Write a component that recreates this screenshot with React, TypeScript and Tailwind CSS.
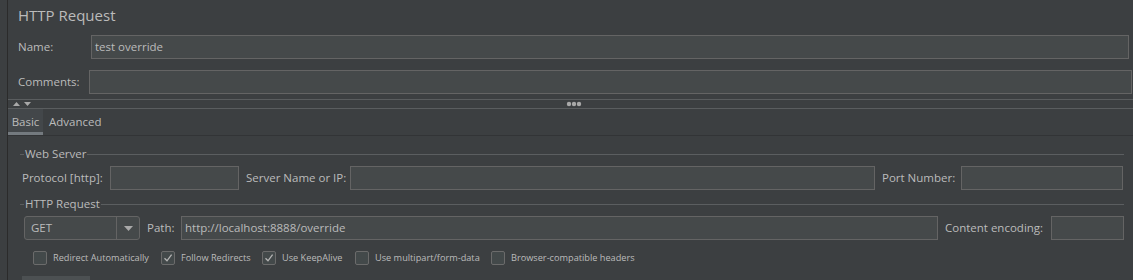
import React from 'react';

const font = { fontFamily: '"Open Sans", "Noto Sans", sans-serif' };

const Field: React.FC<{ className?: string; value?: string }> = ({ className = '', value }) => (
  <div
    className={`h-[24px] shrink-0 bg-[#45494a] border border-[#646464] flex items-center pl-[3px] text-[11.5px] text-[#bbbbbb] ${className}`}
  >
    {value}
  </div>
);

const Label: React.FC<{ className?: string; children: React.ReactNode }> = ({ className = '', children }) => (
  <span className={`text-[11.5px] text-[#bbbbbb] whitespace-nowrap shrink-0 ${className}`}>{children}</span>
);

const TitledLine: React.FC<{ title: string }> = ({ title }) => (
  <div className="flex items-center h-[14px] ml-[12px] mr-[9px]">
    <div className="w-[4px] h-px bg-[#5b5e60]" />
    <span className="px-[1px] text-[11.5px] text-[#bbbbbb] leading-none">{title}</span>
    <div className="flex-1 h-px bg-[#5b5e60]" />
  </div>
);

const Check: React.FC<{ checked?: boolean; label: string; className?: string }> = ({ checked, label, className = '' }) => (
  <div className={`flex items-center gap-[6px] shrink-0 ${className}`}>
    <div className="w-[14px] h-[14px] rounded-[2px] border border-[#6b6b6b] bg-[#43494a] flex items-center justify-center">
      {checked && (
        <svg width="10" height="10" viewBox="0 0 10 10">
          <path d="M1.5 5.2 L4 7.8 L8.6 1.6" fill="none" stroke="#b4b4b4" strokeWidth="1.3" />
        </svg>
      )}
    </div>
    <span className="text-[9.2px] text-[#bbbbbb] whitespace-nowrap">{label}</span>
  </div>
);

export default function App() {
  return (
    <div className="w-[1133px] h-[280px] bg-[#3c3f41] flex overflow-hidden" style={font}>
      <div className="w-[7px] shrink-0" />
      <div className="w-px bg-[#2b2b2b] shrink-0" />
      <div className="flex-1 flex flex-col [&>*]:shrink-0">
        {/* Header */}
        <div className="h-[30px] flex items-center pl-[10px] text-[15px] text-[#bbbbbb]">HTTP Request</div>
        <div className="mt-[5px] flex items-center pl-[10px]">
          <Label className="w-[73px]">Name:</Label>
          <Field className="w-[1038px]" value="test override" />
        </div>
        <div className="mt-[11px] flex items-center pl-[10px]">
          <Label className="w-[71px]">Comments:</Label>
          <Field className="w-[1043px]" />
        </div>

        {/* Splitter */}
        <div className="mt-[5px] h-px bg-[#5a5d5f]" />
        <div className="h-[8px] relative flex items-center">
          <svg className="ml-[5px]" width="20" height="6" viewBox="0 0 20 6">
            <path d="M0 5 L3.5 1 L7 5 Z" fill="#a9a9a9" />
            <path d="M11 1 L18 1 L14.5 5 Z" fill="#a9a9a9" />
          </svg>
          <svg className="absolute left-[558px] top-[1px]" width="16" height="6" viewBox="0 0 16 6">
            <circle cx="3" cy="3" r="2.2" fill="#a9a9a9" />
            <circle cx="8" cy="3" r="2.2" fill="#a9a9a9" />
            <circle cx="13" cy="3" r="2.2" fill="#a9a9a9" />
          </svg>
        </div>
        <div className="h-px bg-[#5a5d5f]" />

        {/* Tabs */}
        <div className="h-[26px] flex items-stretch">
          <div className="w-[35px] bg-[#43474a] border-b-[3px] border-[#747a7f] flex items-center justify-center text-[11.5px] text-[#bbbbbb] pt-[2px]">
            Basic
          </div>
          <div className="flex items-center pl-[6px] text-[11.5px] text-[#bbbbbb] pb-[1px]">Advanced</div>
        </div>
        <div className="h-px bg-[#323436]" />

        {/* Web Server */}
        <div className="mt-[11px]">
          <TitledLine title="Web Server" />
        </div>
        <div className="mt-[5px] flex items-center ml-[14px]">
          <Label className="w-[88px]">Protocol [http]:</Label>
          <Field className="w-[129px]" />
          <Label className="w-[104px] ml-[7px]">Server Name or IP:</Label>
          <Field className="w-[525px]" />
          <Label className="w-[79px] ml-[7px]">Port Number:</Label>
          <Field className="w-[162px]" />
        </div>

        {/* HTTP Request */}
        <div className="mt-[7px]">
          <TitledLine title="HTTP Request" />
        </div>
        <div className="mt-[5px] flex items-center ml-[16px]">
          <div className="w-[116px] h-[24px] shrink-0 rounded-[3px] border border-[#646464] bg-[#45494a] flex items-stretch">
            <div className="flex-1 flex items-center pl-[6px] text-[11.5px] text-[#bbbbbb]">GET</div>
            <div className="w-[23px] border-l border-[#646464] flex items-center justify-center">
              <svg width="9" height="5" viewBox="0 0 9 5">
                <path d="M0 0 L9 0 L4.5 5 Z" fill="#a9a9a9" />
              </svg>
            </div>
          </div>
          <Label className="w-[34px] ml-[7px]">Path:</Label>
          <Field className="w-[757px]" value="http://localhost:8888/override" />
          <Label className="w-[106px] ml-[7px]">Content encoding:</Label>
          <Field className="w-[73px]" />
        </div>

        {/* Options */}
        <div className="mt-[11px] h-[14px] flex items-center ml-[25px]">
          <Check className="w-[128px]" label="Redirect Automatically" />
          <Check className="w-[101px]" checked label="Follow Redirects" />
          <Check className="w-[93px]" checked label="Use KeepAlive" />
          <Check className="w-[136px]" label="Use multipart/form-data" />
          <Check label="Browser-compatible headers" />
        </div>

        <div className="mt-[11px] ml-[14px] w-[68px] h-[10px] bg-[#4c5052]" />
      </div>
    </div>
  );
}
